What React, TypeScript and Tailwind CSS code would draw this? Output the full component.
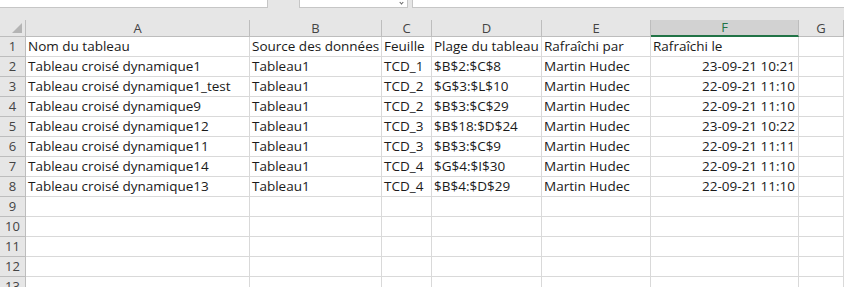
import React from "react";

const cols = ["A", "B", "C", "D", "E", "F", "G"];
const rows: string[][] = [
  ["Nom du tableau", "Source des données", "Feuille", "Plage du tableau", "Rafraîchi par", "Rafraîchi le", ""],
  ["Tableau croisé dynamique1", "Tableau1", "TCD_1", "$B$2:$C$8", "Martin Hudec", "23-09-21 10:21", ""],
  ["Tableau croisé dynamique1_test", "Tableau1", "TCD_2", "$G$3:$L$10", "Martin Hudec", "22-09-21 11:10", ""],
  ["Tableau croisé dynamique9", "Tableau1", "TCD_2", "$B$3:$C$29", "Martin Hudec", "22-09-21 11:10", ""],
  ["Tableau croisé dynamique12", "Tableau1", "TCD_3", "$B$18:$D$24", "Martin Hudec", "23-09-21 10:22", ""],
  ["Tableau croisé dynamique11", "Tableau1", "TCD_3", "$B$3:$C$9", "Martin Hudec", "22-09-21 11:11", ""],
  ["Tableau croisé dynamique14", "Tableau1", "TCD_4", "$G$4:$I$30", "Martin Hudec", "22-09-21 11:10", ""],
  ["Tableau croisé dynamique13", "Tableau1", "TCD_4", "$B$4:$D$29", "Martin Hudec", "22-09-21 11:10", ""],
  ["", "", "", "", "", "", ""],
  ["", "", "", "", "", "", ""],
  ["", "", "", "", "", "", ""],
  ["", "", "", "", "", "", ""],
  ["", "", "", "", "", "", ""],
];

export default function App() {
  return (
    <div
      className="w-[844px] h-[287px] overflow-hidden bg-white text-[15px] text-[#1a1a1a]"
      style={{ fontFamily: "'Open Sans', 'Liberation Sans', sans-serif" }}
    >
      {/* formula bar strip */}
      <div className="h-[20px] bg-[#e6e6e6] flex items-start">
        <div className="w-[268px] h-[8px] bg-white border-r border-b border-[#c6c6c6]" />
        <div className="w-[31px]" />
        <div className="w-[109px] h-[8px] bg-white border-l border-r border-b border-[#c6c6c6] relative">
          <span className="absolute right-[4px] top-[1px] w-[3px] h-[3px] border-r border-b border-[#666] rotate-45" />
        </div>
        <div className="w-[4px]" />
        <div className="flex-1 h-[8px] bg-white border-l border-b border-[#c6c6c6]" />
      </div>
      <div className="grid grid-cols-[26px_224px_132px_50px_110px_109px_148px_1fr] text-[13px]">
        {/* header row */}
        <div className="h-[17px] bg-[#e6e6e6] border-r border-b border-[#bdbdbd] relative">
          <svg className="absolute right-[3px] bottom-[3px]" width="10" height="10" viewBox="0 0 10 10">
            <polygon points="10,0 10,10 0,10" fill="#b4b4b4" />
          </svg>
        </div>
        {cols.map((c) =>
          c === "F" ? (
            <div
              key={c}
              className="h-[17px] bg-[#d2d2d2] border-r border-[#bdbdbd] border-b-2 border-b-[#217346] flex items-center justify-center text-[#217346] text-[13px] leading-none"
            >
              {c}
            </div>
          ) : (
            <div
              key={c}
              className="h-[17px] bg-[#e6e6e6] border-r border-b border-[#bdbdbd] flex items-center justify-center text-[#444] text-[13px] leading-none"
            >
              {c}
            </div>
          )
        )}
        {rows.map((r, i) => (
          <React.Fragment key={i}>
            <div className="h-[20px] bg-[#e6e6e6] border-r border-b border-[#bdbdbd] flex items-center justify-center text-[#444] text-[13px] leading-none">
              {i + 1}
            </div>
            {r.map((v, j) => (
              <div
                key={j}
                className={`h-[20px] border-r border-b border-[#d9d9d9] flex items-center px-[2px] whitespace-nowrap overflow-visible leading-none text-[13.5px] ${
                  j === 5 && i > 0 ? "justify-end pr-[3px]" : ""
                }`}
              >
                {v}
              </div>
            ))}
          </React.Fragment>
        ))}
      </div>
    </div>
  );
}
